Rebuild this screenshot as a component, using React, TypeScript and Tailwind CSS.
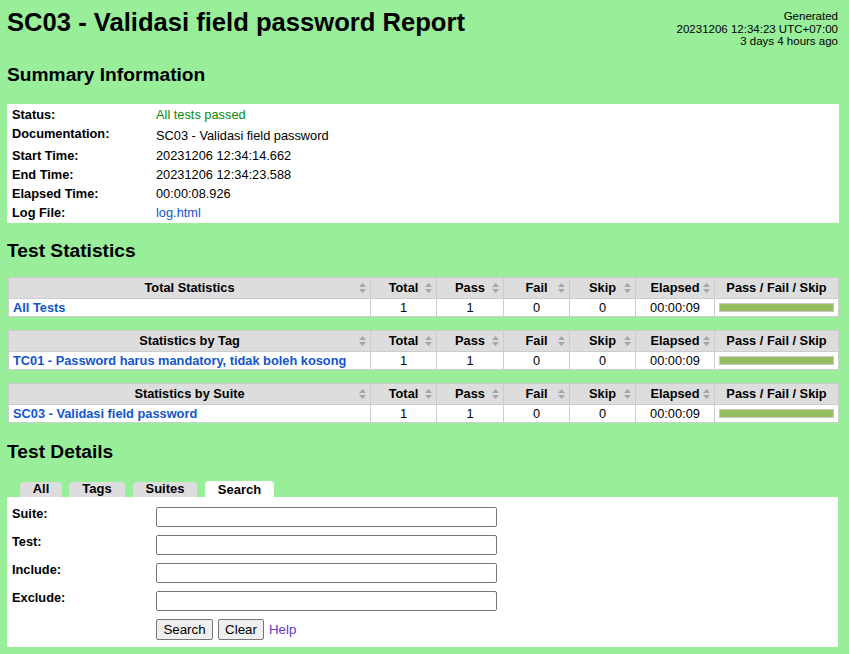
import React from 'react';

const SortIcon = () => (
  <svg
    width="7"
    height="10"
    viewBox="0 0 7 10"
    className="absolute right-[4px] top-1/2 -translate-y-1/2"
  >
    <path d="M3.5 0L7 4H0z" fill="#a6a6a6" />
    <path d="M0 6h7L3.5 10z" fill="#a6a6a6" />
  </svg>
);

const statTables = [
  { title: 'Total Statistics', name: 'All Tests' },
  {
    title: 'Statistics by Tag',
    name: 'TC01 - Password harus mandatory, tidak boleh kosong',
  },
  { title: 'Statistics by Suite', name: 'SC03 - Validasi field password' },
];

const numCols = [
  { label: 'Total', w: 'w-[66px]', value: '1' },
  { label: 'Pass', w: 'w-[67px]', value: '1' },
  { label: 'Fail', w: 'w-[66px]', value: '0' },
  { label: 'Skip', w: 'w-[66px]', value: '0' },
  { label: 'Elapsed', w: 'w-[79px]', value: '00:00:09' },
];

const summary = [
  { label: 'Status:', value: 'All tests passed', cls: 'text-[#0a8a0a]' },
  { label: 'Documentation:', value: 'SC03 - Validasi field password', doc: true },
  { label: 'Start Time:', value: '20231206 12:34:14.662' },
  { label: 'End Time:', value: '20231206 12:34:23.588' },
  { label: 'Elapsed Time:', value: '00:00:08.926' },
  { label: 'Log File:', value: 'log.html', cls: 'text-[#1155cc]' },
];

function StatTable({ title, name }: { title: string; name: string }) {
  return (
    <table className="table-fixed border-collapse w-[830px] ml-[1px] mb-[13px]">
      <thead>
        <tr>
          <th className="relative w-[362px] h-[21px] p-0 bg-[#dddddd] border border-[#cccccc] font-bold text-center">
            {title}
            <SortIcon />
          </th>
          {numCols.map((c) => (
            <th
              key={c.label}
              className={`relative ${c.w} h-[21px] p-0 bg-[#dddddd] border border-[#cccccc] font-bold text-center`}
            >
              {c.label}
              <SortIcon />
            </th>
          ))}
          <th className="w-[124px] h-[21px] p-0 bg-[#dddddd] border border-[#cccccc] font-bold text-center">
            Pass / Fail / Skip
          </th>
        </tr>
      </thead>
      <tbody>
        <tr className="bg-white">
          <td className="h-[18px] p-0 pl-[4px] border border-[#cccccc] font-bold text-[#1155cc] whitespace-nowrap">
            {name}
          </td>
          {numCols.map((c) => (
            <td
              key={c.label}
              className="h-[18px] p-0 border border-[#cccccc] text-center"
            >
              {c.value}
            </td>
          ))}
          <td className="h-[18px] p-0 pl-[4px] pr-[4px] border border-[#cccccc]">
            <div className="h-[9px] border border-[#c8c8c8] bg-[#97bd61]" />
          </td>
        </tr>
      </tbody>
    </table>
  );
}

const formRows = ['Suite:', 'Test:', 'Include:', 'Exclude:'];

export default function App() {
  return (
    <div className="min-h-screen bg-[#99ee99] px-[7px] pt-[7px] pb-[8px] text-black text-[12.8px] leading-[15px] font-['Liberation_Sans',Arial,sans-serif]">
      <div className="flex justify-between items-start w-[832px]">
        <h1 className="text-[25.6px] leading-[30px] font-bold">
          SC03 - Validasi field password Report
        </h1>
        <div className="text-right text-[11.5px] leading-[12.5px] mt-[3px] mr-[1px]">
          <div>Generated</div>
          <div>20231206 12:34:23 UTC+07:00</div>
          <div>3 days 4 hours ago</div>
        </div>
      </div>

      <h2 className="text-[19.2px] leading-[22px] font-bold mt-[16px] mb-[18px]">
        Summary Information
      </h2>
      <div className="bg-white w-[832px] pt-[1px] pb-[1px]">
        {summary.map((r) => (
          <div
            key={r.label}
            className={`flex ${r.doc ? 'h-[22px]' : 'h-[19px]'} items-start pt-[2px]`}
          >
            <div className="w-[149px] pl-[5px] font-bold">{r.label}</div>
            <div className={`${r.doc ? 'pt-[2px]' : ''} ${r.cls ?? ''}`}>
              {r.value}
            </div>
          </div>
        ))}
      </div>

      <h2 className="text-[19.2px] leading-[22px] font-bold mt-[17px] mb-[15px]">
        Test Statistics
      </h2>
      {statTables.map((t) => (
        <StatTable key={t.title} title={t.title} name={t.name} />
      ))}

      <h2 className="text-[19.2px] leading-[22px] font-bold mt-[18px] mb-[18px]">
        Test Details
      </h2>
      <div className="flex items-end ml-[13px]">
        <div className="w-[42px] h-[15px] bg-[#dddddd] rounded-t-[4px] text-center font-bold text-[13px] leading-[14px]">
          All
        </div>
        <div className="w-[56px] h-[15px] ml-[7px] bg-[#dddddd] rounded-t-[4px] text-center font-bold text-[13px] leading-[14px]">
          Tags
        </div>
        <div className="w-[64px] h-[15px] ml-[8px] bg-[#dddddd] rounded-t-[4px] text-center font-bold text-[13px] leading-[14px]">
          Suites
        </div>
        <div className="w-[69px] h-[16px] ml-[8px] bg-white rounded-t-[4px] text-center font-bold text-[13px] leading-[16px] pt-[1px]">
          Search
        </div>
      </div>
      <div className="bg-white w-[831px] pt-[10px] pb-[7px]">
        {formRows.map((label) => (
          <div key={label} className="flex items-start h-[28px]">
            <div className="w-[149px] pl-[5px] font-bold -mt-[1px]">{label}</div>
            <input
              type="text"
              className="w-[341px] h-[20px] border border-[#767676] rounded-[2px] bg-white"
            />
          </div>
        ))}
        <div className="flex items-center pl-[149px]">
          <button className="h-[21px] w-[57px] border border-[#767676] rounded-[2px] bg-[#efefef] text-[13.3px] leading-[15px]">
            Search
          </button>
          <button className="h-[21px] w-[46px] ml-[5px] border border-[#767676] rounded-[2px] bg-[#efefef] text-[13.3px] leading-[15px]">
            Clear
          </button>
          <span className="ml-[5px] text-[#6633cc] text-[13.3px]">Help</span>
        </div>
      </div>
    </div>
  );
}
